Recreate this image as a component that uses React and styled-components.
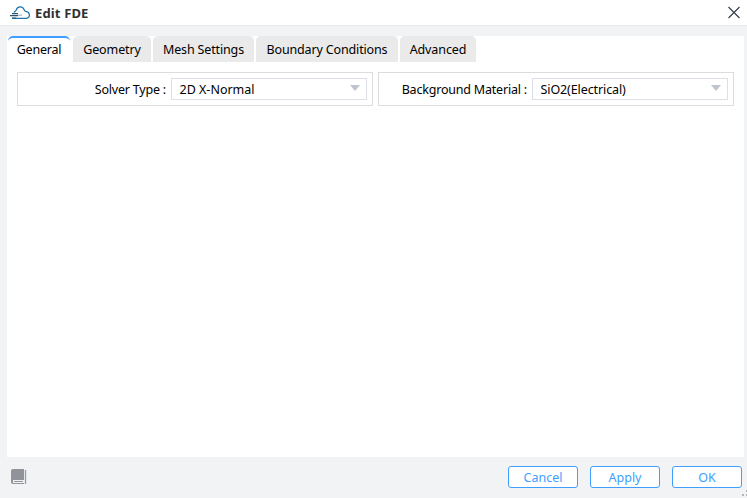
import React from 'react';
import styled, { createGlobalStyle } from 'styled-components';

const GlobalStyle = createGlobalStyle`
  * { box-sizing: border-box; }
  body { margin: 0; overflow: hidden; background: #f1f3f5; }
`;
const Dialog = styled.div`
  width: 747px; height: 498px; display: flex; flex-direction: column;
  position: relative; background: #f1f3f5; color: #000;
  font: 12.5px/18px "Noto Sans", "Open Sans", sans-serif;
`;
const TitleBar = styled.header`
  height: 26px; flex: none; display: flex; align-items: center;
  padding: 0 6px 0 10px; background: #fff; border-bottom: 1px solid #e8eaf0;
`;
const Title = styled.h1`
  margin: 1px 0 0 5px; flex: 1; font-size: 13px; line-height: 18px;
  font-weight: 700; color: #303133; letter-spacing: 0.15px;
`;
const CloseButton = styled.button`
  border: 0; padding: 0; background: none; width: 14px; height: 14px; display: flex;
`;
const Panel = styled.main`
  margin: 10px 3px 0 7px; height: 421px; flex: none; background: #fff;
`;
const Tabs = styled.nav`
  display: flex; gap: 2px; height: 26px; padding-left: 1px;
`;
const Tab = styled.div`
  width: ${(p) => p.$width}px; height: 26px; padding-top: ${(p) => (p.$active ? 3 : 5)}px;
  margin-right: ${(p) => (p.$active ? 1 : 0)}px;
  text-align: center; white-space: nowrap; border-radius: 5px 5px 0 0;
  letter-spacing: ${(p) => p.$spacing || 0}px;
  background: ${(p) => (p.$active ? '#fff' : '#eaeaea')};
  border-top: ${(p) => (p.$active ? '2px solid #409eff' : '0')};
`;
const Fields = styled.div`
  display: flex; gap: 5px; padding: 10px 10px 0;
`;
const Field = styled.div`
  width: 356px; height: 34px; border: 1px solid #dcdcdc; display: flex;
  align-items: center; justify-content: flex-end; padding-right: 5px;
`;
const Label = styled.label`
  margin: 2px 5px 0 0; white-space: nowrap; letter-spacing: -0.2px;
`;
const Select = styled.div`
  width: 196px; height: 22px; border: 1px solid #dcdfe6; display: flex;
  align-items: center; justify-content: space-between; padding: 0 6px 0 7.5px;
  letter-spacing: ${(p) => p.$spacing || 0}px;
`;
const Value = styled.span`
  margin-top: 2px;
`;
const Arrow = styled.svg`
  display: block; margin-top: -2px;
`;
const Footer = styled.footer`
  height: 41px; display: flex; align-items: center; gap: 12px; padding: 0 5px 0 11px;
`;
const HelpIcon = styled.svg`
  margin: -1px auto 0 0;
`;
const Button = styled.button`
  width: 70px; height: 22px; margin-top: -1px; padding: 1px 0 0; border: 1px solid #409eff;
  border-radius: 3px; background: #fff; color: #409eff; font: inherit; line-height: 18px;
`;
const Grip = styled.svg`
  position: absolute; right: 0; bottom: 0;
`;

const tabs = [
  ['General', 62, -0.2], ['Geometry', 78, -0.1], ['Mesh Settings', 101, -0.15],
  ['Boundary Conditions', 142, -0.15], ['Advanced', 76, -0.1],
];

function Dropdown({ value, spacing }) {
  return (
    <Select $spacing={spacing}>
      <Value>{value}</Value>
      <Arrow width="10" height="6"><path d="M0 0H10L5 6Z" fill="#c0c4cc" /></Arrow>
    </Select>
  );
}

export default function App() {
  return (
    <>
      <GlobalStyle />
      <Dialog>
        <TitleBar>
          <svg width="20" height="14" viewBox="0 0 20 14" fill="none">
            <path d="M4 6.5C4.6 5.4 5.5 5.6 6.2 4C7.5 .2 12.5 -.2 14 3.5C14.3 4.5 14.5 5.1 15.8 5.4C19.8 6 20.6 10.5 17.6 12Q17 12.4 15 12.4H3" stroke="#1b75a8" strokeWidth="1.2" />
            <path d="M2 7.7H8M0 9.7H8" stroke="#33536a" strokeWidth="1.3" />
            <path d="M8 9.2H12" stroke="#9aa8b2" />
            <path d="M2 12.2H6" stroke="#1b6590" strokeWidth="1.5" />
          </svg>
          <Title>Edit FDE</Title>
          <CloseButton aria-label="Close">
            <svg width="14" height="14"><path d="M1.5 1L12.5 12M12.5 1L1.5 12" stroke="#333a48" strokeWidth="1.1" /></svg>
          </CloseButton>
        </TitleBar>
        <Panel>
          <Tabs>
            {tabs.map(([name, width, spacing], i) => (
              <Tab key={name} $width={width} $spacing={spacing} $active={i === 0}>{name}</Tab>
            ))}
          </Tabs>
          <Fields>
            <Field><Label>Solver Type :</Label><Dropdown value="2D X-Normal" /></Field>
            <Field><Label>Background Material :</Label><Dropdown value="SiO2(Electrical)" spacing={-0.1} /></Field>
          </Fields>
        </Panel>
        <Footer>
          <HelpIcon width="17" height="16">
            <path d="M2 0H13V15H2Q0 15 0 13V2Q0 0 2 0Z" fill="#909399" />
            <path d="M2 11H13V14H2Z" fill="#f4f4f4" />
            <path d="M3 12.5H12" stroke="#909399" />
            <path d="M14.5 1V15" stroke="#909eae" strokeWidth="1.3" />
          </HelpIcon>
          <Button>Cancel</Button><Button>Apply</Button><Button>OK</Button>
        </Footer>
        <Grip width="6" height="9" fill="#b5b5b5"><path d="M1 5h2v2H1zM5 5h1v2H5zM5 1h1v2H5z" /></Grip>
      </Dialog>
    </>
  );
}
